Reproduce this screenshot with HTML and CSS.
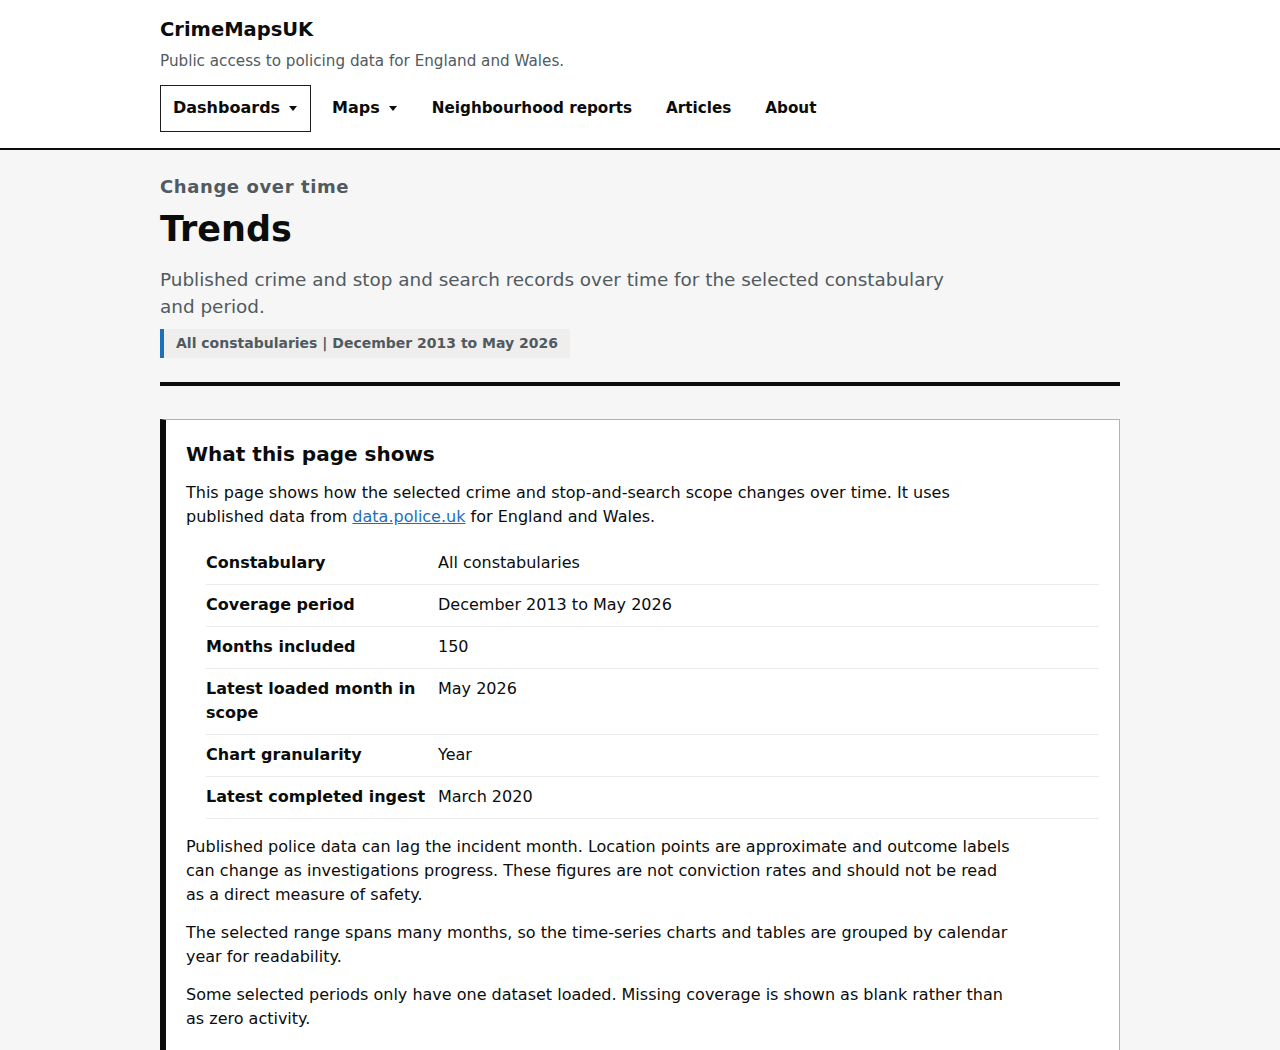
FILE: index.html
```html
<!DOCTYPE html>
<html lang="en-GB">
<head>
<meta charset="utf-8">
<title>Trends – CrimeMapsUK</title>
<link rel="stylesheet" href="styles.css">
</head>
<body>
<header class="site-header">
  <div class="container">
    <div class="brand">CrimeMapsUK</div>
    <p class="tagline">Public access to policing data for England and Wales.</p>
    <nav class="nav">
      <button class="nav-item nav-toggle is-open" type="button">Dashboards <span class="caret"></span></button>
      <button class="nav-item nav-toggle" type="button">Maps <span class="caret"></span></button>
      <a class="nav-item" href="#">Neighbourhood reports</a>
      <a class="nav-item" href="#">Articles</a>
      <a class="nav-item" href="#">About</a>
    </nav>
  </div>
</header>

<main class="container main">
  <p class="eyebrow">Change over time</p>
  <h1 class="title">Trends</h1>
  <p class="lede">Published crime and stop and search records over time for the selected constabulary and period.</p>
  <div class="scope-tag">All constabularies | December 2013 to May 2026</div>
  <hr class="rule">

  <section class="panel">
    <h2 class="panel-title">What this page shows</h2>
    <p class="body-text">This page shows how the selected crime and stop-and-search scope changes over time. It uses published data from <a href="#" class="link">data.police.uk</a> for England and Wales.</p>
    <table class="summary">
      <tbody>
        <tr><th>Constabulary</th><td>All constabularies</td></tr>
        <tr><th>Coverage period</th><td>December 2013 to May 2026</td></tr>
        <tr><th>Months included</th><td>150</td></tr>
        <tr><th>Latest loaded month in scope</th><td>May 2026</td></tr>
        <tr><th>Chart granularity</th><td>Year</td></tr>
        <tr><th>Latest completed ingest</th><td>March 2020</td></tr>
      </tbody>
    </table>
    <p class="body-text">Published police data can lag the incident month. Location points are approximate and outcome labels can change as investigations progress. These figures are not conviction rates and should not be read as a direct measure of safety.</p>
    <p class="body-text">The selected range spans many months, so the time-series charts and tables are grouped by calendar year for readability.</p>
    <p class="body-text">Some selected periods only have one dataset loaded. Missing coverage is shown as blank rather than as zero activity.</p>
  </section>
</main>
</body>
</html>
```

FILE: styles.css
```css
* { box-sizing: border-box; }

html, body {
  margin: 0;
  padding: 0;
}

body {
  background: #f6f6f6;
  color: #0b0c0c;
  font-family: "DejaVu Sans", Verdana, sans-serif;
  font-size: 16px;
  line-height: 24px;
}

.container {
  width: 960px;
  margin: 0 auto;
}

/* Header */
.site-header {
  background: #ffffff;
  border-bottom: 2px solid #0b0c0c;
  padding: 16px 0 16px;
}

.brand {
  font-size: 19.5px;
  line-height: 28px;
  font-weight: 700;
}

.tagline {
  margin: 5px 0 0;
  color: #505a5f;
  font-size: 15.2px;
  line-height: 24px;
}

.nav {
  display: flex;
  gap: 8px;
  margin-top: 12px;
}

.nav-item {
  display: flex;
  align-items: center;
  height: 47px;
  margin: 0;
  padding: 0 12px 2px;
  border: 1px solid transparent;
  background: none;
  color: #0b0c0c;
  font-family: inherit;
  font-size: 15.2px;
  font-weight: 700;
  text-decoration: none;
  cursor: pointer;
}

.nav-toggle {
  padding-right: 13px;
  font-size: 16px;
}

.nav-item.is-open {
  border-color: #1d1d1d;
}

.caret {
  display: inline-block;
  width: 0;
  height: 0;
  margin-left: 9px;
  margin-top: 2px;
  border-left: 4.5px solid transparent;
  border-right: 4.5px solid transparent;
  border-top: 5px solid #0b0c0c;
}

/* Page intro */
.main {
  padding-top: 25px;
}

.eyebrow {
  margin: 0;
  color: #505a5f;
  font-size: 18px;
  line-height: 24px;
  font-weight: 700;
  letter-spacing: 0.6px;
}

.title {
  margin: 8px 0 0;
  font-size: 35px;
  line-height: 44px;
  font-weight: 700;
}

.lede {
  margin: 15px 0 0;
  max-width: 800px;
  color: #505a5f;
  font-size: 18.4px;
  line-height: 27px;
}

.scope-tag {
  display: inline-block;
  margin-top: 9px;
  padding: 3px 12px 3px 12px;
  border-left: 4px solid #1d70b8;
  background: #efeeec;
  color: #505a5f;
  font-size: 14px;
  line-height: 23px;
  font-weight: 700;
}

.rule {
  margin: 24px 0 0;
  border: 0;
  height: 4px;
  background: #0b0c0c;
}

/* Summary panel */
.panel {
  margin-top: 33px;
  padding: 20px 20px 20px 20px;
  background: #ffffff;
  border: 1px solid #b1b4b6;
  border-left: 6px solid #0b0c0c;
}

.panel-title {
  margin: 0 0 13px;
  font-size: 20px;
  line-height: 28px;
  font-weight: 700;
}

.body-text {
  margin: 0 0 14px;
  max-width: 832px;
}

.link {
  color: #1d70b8;
  text-decoration: underline;
}

.summary {
  width: calc(100% - 20px);
  margin: 11px 0 16px 20px;
  border-collapse: collapse;
}

.summary th,
.summary td {
  padding: 8px 0 9px;
  border-bottom: 1px solid #ebebeb;
  text-align: left;
  vertical-align: top;
}

.summary th {
  width: 232px;
  padding-right: 10px;
  font-weight: 700;
}
```
